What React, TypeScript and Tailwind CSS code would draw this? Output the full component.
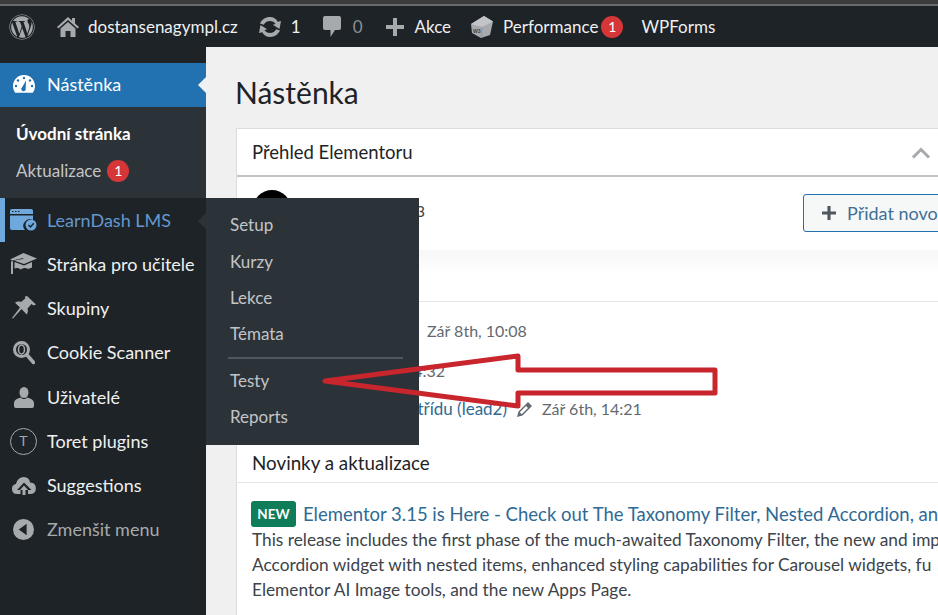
import { FaWordpress } from "react-icons/fa";

const FONT = "font-['Lato','Noto_Sans',sans-serif]";

function Badge({ n }: { n: number }) {
  return (
    <span className="flex h-[22px] w-[22px] items-center justify-center rounded-full bg-[#d63638] text-[14px] leading-none text-white">
      {n}
    </span>
  );
}

function HomeIcon() {
  return (
    <svg width="22" height="21" viewBox="0 0 22 21" fill="#a7aaad">
      <path d="M11 1 0 11l1.400 1.500L11 4l9.600 8.500L22 11l-4-3.600V2h-3v2.700z" />
      <path d="M3.500 12.500 11 6l7.500 6.500V21h-5v-6h-5v6h-5z" />
    </svg>
  );
}

function UpdateIcon() {
  return (
    <svg width="24" height="20" viewBox="0 0 24 20" fill="#a7aaad">
      <path d="M12 0c3.400 0 6.300 1.900 7.700 4.800L23 4l-1.500 8-6.700-4.300 2.700-.8C16.500 5 14.400 4 12 4 9.200 4 6.900 5.500 5.800 7.700L2 6.400C3.700 2.600 7.500 0 12 0z" />
      <path d="M12 20c-3.400 0-6.300-1.900-7.700-4.800L1 16l1.500-8 6.700 4.300-2.700.8C7.500 15 9.600 16 12 16c2.800 0 5.100-1.500 6.200-3.700l3.800 1.300C20.300 17.400 16.500 20 12 20z" />
    </svg>
  );
}

function CommentIcon() {
  return (
    <svg width="18" height="21" viewBox="0 0 18 21" fill="#a7aaad">
      <path d="M2 0h14a2 2 0 0 1 2 2v10a2 2 0 0 1-2 2h-4l-4.500 7V14H2a2 2 0 0 1-2-2V2a2 2 0 0 1 2-2z" />
    </svg>
  );
}

function PlusIcon({ size = 18, color = "#a7aaad" }: { size?: number; color?: string }) {
  return (
    <svg className="shrink-0" width={size} height={size} viewBox="0 0 18 18" fill={color}>
      <path d="M7 0h4v7h7v4h-7v7H7v-7H0V7h7z" />
    </svg>
  );
}

function CubeIcon() {
  return (
    <svg width="24" height="24" viewBox="0 0 24 24">
      <path d="M1 9 14 1l9 5.500-3 13.500-9 3-9-5z" fill="#a7aaad" />
      <path d="M1 9 14 1l9 5.500-11 5.500z" fill="#c3c4c7" />
      <path d="M12 12l-1 11" stroke="#8c8f94" strokeWidth="0.8" />
      <text x="3" y="18" fontSize="5" fontWeight="700" fill="#3c434a" fontFamily="Liberation Sans, sans-serif">W3</text>
    </svg>
  );
}

function GaugeIcon() {
  return (
    <svg width="22" height="18" viewBox="0 0 22 18">
      <path d="M11 0C4.900 0 0 4.900 0 11c0 2.500.8 4.900 2.200 6.800h17.600A11 11 0 0 0 22 11C22 4.900 17.100 0 11 0z" fill="#fff" />
      <circle cx="11" cy="3" r="1.200" fill="#2271b1" />
      <circle cx="5" cy="5.500" r="1.200" fill="#2271b1" />
      <circle cx="3" cy="11" r="1.200" fill="#2271b1" />
      <circle cx="17" cy="5.500" r="1.200" fill="#2271b1" />
      <circle cx="19" cy="11" r="1.200" fill="#2271b1" />
      <path d="M13 5.500 9.300 12a2.300 2.300 0 1 0 3.400 1.200z" fill="#2271b1" />
    </svg>
  );
}

function LearnDashIcon() {
  return (
    <svg width="27" height="22" viewBox="0 0 27 22">
      <path d="M0 2a2 2 0 0 1 2-2h19a2 2 0 0 1 2 2v3H0z" fill="#6fa8dc" />
      <path d="M0 6.500h23V11a6.500 6.500 0 0 0-8 10H2a2 2 0 0 1-2-2z" fill="#6fa8dc" />
      <path d="M2 2.500h1.500M5 2.500h1.500M8 2.500h1.500" stroke="#1d2327" strokeWidth="1" />
      <circle cx="21" cy="16" r="5.500" fill="#6fa8dc" />
      <path d="m18.500 16 2 2 3.200-3.800" stroke="#1d2327" strokeWidth="1.400" fill="none" />
    </svg>
  );
}

function CapIcon() {
  return (
    <svg width="27" height="22" viewBox="0 0 27 22" fill="#a7aaad">
      <path d="M13.500 0 27 5.500 14 11 4 7.500 13 6l.5-1-11 2.500L0 6.500z" />
      <path d="M1 8.500 3 8v13H1z" />
      <path d="M4.500 9 14 12.500 22 9v5.500l-4 1.500c-2-1.500-5-1.500-7 .5-2-1.500-4-2-6.500-1z" />
    </svg>
  );
}

function PinIcon() {
  return (
    <svg width="24" height="24" viewBox="0 0 24 24" fill="#a7aaad">
      <path d="m15 0 9 8.500-2.500 1-2-1.500-4 4.500c.8 2.400.3 4.500-.8 6L9.500 13 1 22.500l-1-.5L8 11.500 3 6.800c1.500-1.200 3.800-1.600 6-.8l4.500-3.800-.8-1.400z" />
    </svg>
  );
}

function ScanIcon() {
  return (
    <svg width="22" height="24" viewBox="0 0 22 24" fill="none">
      <circle cx="8.500" cy="8.500" r="7" stroke="#a7aaad" strokeWidth="3" />
      <ellipse cx="8.500" cy="8.500" rx="3" ry="4.500" stroke="#a7aaad" strokeWidth="1.500" />
      <path d="m14 14 6.500 7.500" stroke="#a7aaad" strokeWidth="3.500" strokeLinecap="round" />
    </svg>
  );
}

function UserIcon() {
  return (
    <svg width="20" height="21" viewBox="0 0 20 21" fill="#a7aaad">
      <ellipse cx="10" cy="5.500" rx="4.500" ry="5.500" />
      <path d="M7 10.500c-3 .8-7 2.300-7 5.500v3c0 1 .8 2 2 2h16c1.200 0 2-1 2-2v-3c0-3.200-4-4.700-7-5.500-1.500 2-4.500 2-6 0z" />
    </svg>
  );
}

function CloudIcon() {
  return (
    <svg width="24" height="18" viewBox="0 0 24 18" fill="#a7aaad">
      <path d="M12 0a6 6 0 0 1 6 5.500h.5a5.800 5.800 0 0 1 .5 11.500h-3v-4h3.500L12 5.500 5 13h3.500v4H5a5 5 0 0 1-1-9.900A8 8 0 0 1 12 0z" />
      <path d="M10.500 13H8l4-4.500 4 4.500h-2.500v5h-3z" />
    </svg>
  );
}

function CollapseIcon() {
  return (
    <svg width="21" height="21" viewBox="0 0 20 20">
      <circle cx="10" cy="10" r="10" fill="#a7aaad" />
      <path d="M13 4.500v11L5.500 10z" fill="#1d2327" />
    </svg>
  );
}

function TIcon() {
  return (
    <span className="flex h-[27px] w-[27px] items-center justify-center rounded-full border-[1.5px] border-[#a7aaad] text-[14px] leading-none text-[#a7aaad]">
      T
    </span>
  );
}

function PencilIcon() {
  return (
    <svg width="15" height="15" viewBox="0 0 15 15" fill="#646970">
      <path d="M11 0l4 4-9.500 9.500L0 15l1.500-5.500zM2.800 10.300l1.900 1.900L11 6 9 4z" />
    </svg>
  );
}

const menu = [
  { label: "Stránka pro učitele", icon: <CapIcon /> },
  { label: "Skupiny", icon: <PinIcon /> },
  { label: "Cookie Scanner", icon: <ScanIcon /> },
  { label: "Uživatelé", icon: <UserIcon /> },
  { label: "Toret plugins", icon: <TIcon /> },
  { label: "Suggestions", icon: <CloudIcon /> },
];

function MenuIcon({ children }: { children: React.ReactNode }) {
  return <span className="flex w-[47px] justify-center">{children}</span>;
}

function Sidebar() {
  return (
    <aside className="h-full w-[206px] shrink-0 bg-[#1d2327] pt-4 text-[18px]">
      <div className="relative flex h-[44px] items-center bg-[#2271b1] pb-[2px] text-white">
        <MenuIcon><GaugeIcon /></MenuIcon>
        <span>Nástěnka</span>
        <span className="absolute right-0 top-[14px] h-0 w-0 border-y-[8px] border-r-[8px] border-y-transparent border-r-[#f0f0f1]" />
      </div>
      <div className="flex h-[91px] flex-col bg-[#2c3338] pl-4 pt-[15px] text-[#c3c4c7]">
        <div className="h-[37px] text-[17px] font-bold leading-[24px] text-white">Úvodní stránka</div>
        <div className="flex items-center gap-[6px] text-[17px] leading-[24px]">
          Aktualizace <Badge n={1} />
        </div>
      </div>
      <div className="flex h-[44px] items-center border-l-[5px] border-[#6fa8dc] text-[#6498cf]">
        <span className="flex w-[37px] justify-center">
          <LearnDashIcon />
        </span>
        <span className="ml-[5px]">LearnDash LMS</span>
      </div>
      {menu.map((item) => (
        <div key={item.label} className="flex h-[44.300px] items-center text-[#f0f0f1]">
          <MenuIcon>{item.icon}</MenuIcon>
          <span>{item.label}</span>
        </div>
      ))}
      <div className="flex h-[44px] items-center text-[#a7aaad]">
        <MenuIcon><CollapseIcon /></MenuIcon>
        <span>Zmenšit menu</span>
      </div>
    </aside>
  );
}

function Flyout() {
  const top = ["Setup", "Kurzy", "Lekce", "Témata"];
  return (
    <div className="absolute left-[206px] top-[198px] h-[247px] w-[213px] bg-[#2c3338] pt-[9px] text-[17px] text-[#c3c4c7]">
      <span className="absolute -left-[8px] top-[15px] h-0 w-0 border-y-[8px] border-r-[8px] border-y-transparent border-r-[#2c3338]" />
      {top.map((t) => (
        <div key={t} className="flex h-[36.300px] items-center pl-6">{t}</div>
      ))}
      <div className="mx-[22px] mb-[3px] mt-[5px] h-[2px] w-[175px] bg-[#50575e]" />
      <div className="flex h-[36.400px] items-center pl-6">Testy</div>
      <div className="flex h-[36.400px] items-center pl-6">Reports</div>
    </div>
  );
}

function Content() {
  return (
    <main className="min-w-0 flex-1 overflow-hidden bg-[#f0f0f1] pl-[30px]">
      <h1 className="-ml-px h-[81px] pt-[26px] text-[30px] leading-[38px] text-[#1d2327]">Nástěnka</h1>
      <section className="h-[600px] w-[760px] border border-[#dcdcde] bg-white">
        <div className="flex h-[48px] items-center justify-between border-b-2 border-[#c3c4c7] pl-[15px] pr-[64px] pt-[1px]">
          <h2 className="text-[18.500px] text-[#1d2327]">Přehled Elementoru</h2>
          <svg width="20" height="12" viewBox="0 0 20 12" fill="none">
            <path d="M2 10.500 10 2.500l8 8" stroke="#a7aaad" strokeWidth="3" />
          </svg>
        </div>

        <div className="relative flex h-[73px] items-start pl-[16px] pt-[13px]">
          <span className="h-[38px] w-[38px] rounded-full bg-black" />
          <span className="ml-3 w-[122px] whitespace-nowrap pt-[9px] text-right text-[16px] text-[#3c434a]">Elementor 3.15.3</span>
          <div className="absolute left-[566px] top-[17px] flex h-[38px] w-[200px] items-center gap-[11px] whitespace-nowrap rounded-[3px] border border-[#2271b1] bg-[#f6f7f7] pl-[18px] text-[18px] text-[#3f6f96]">
            <PlusIcon size={14} color="#50575e" />
            Přidat novou stránku
          </div>
        </div>

        <div className="h-[51px] bg-linear-to-b from-[#f7f7f8] to-white to-50% pl-[15px] pt-[14px] text-[17px] text-[#1d2327]">
          Nedávno upraveno
        </div>

        <div className="flex h-[144px] flex-col border-t border-[#e4e4e6] pt-[17px] text-[16px] leading-[24px] text-[#646970]">
          <div className="flex h-[24px] items-center">
            <span className="w-[170px] text-right text-[17px] text-[#2e6a94]">Domů</span>
            <span className="ml-[20px]">Zář 8th, 10:08</span>
          </div>
          <div className="mt-[16px] flex h-[24px] items-center">
            <span className="w-[208px] text-right">Zář 7th, 14:32</span>
          </div>
          <div className="mt-[14px] flex h-[24px] items-center">
            <span className="w-[270px] text-right text-[17px] text-[#2e6a94]">Přidat třídu (lead2)</span>
            <span className="ml-[10px]"><PencilIcon /></span>
            <span className="ml-[10px]">Zář 6th, 14:21</span>
          </div>
        </div>

        <div className="flex h-[38px] items-center border-b border-[#e4e4e6] pl-[15px] text-[18.800px] text-[#1d2327]">
          Novinky a aktualizace
        </div>

        <div className="whitespace-nowrap pl-[15px] pt-[18px] text-[17.300px] leading-[25px] text-[#3c434a]">
          <div className="-ml-px flex items-center gap-[7px]">
            <span className="flex h-[26px] w-[45px] items-center justify-center rounded-[3px] bg-[#0f7c5a] text-[13.500px] font-bold text-white">NEW</span>
            <span className="text-[18.500px] text-[#2e6a94]">Elementor 3.15 is Here - Check out The Taxonomy Filter, Nested Accordion, an</span>
          </div>
          <p>This release includes the first phase of the much-awaited Taxonomy Filter, the new and imp</p>
          <p>Accordion widget with nested items, enhanced styling capabilities for Carousel widgets, fu</p>
          <p>Elementor AI Image tools, and the new Apps Page.</p>
        </div>
      </section>
    </main>
  );
}

export default function App() {
  return (
    <div className={`relative flex h-[615px] w-[938px] flex-col overflow-hidden bg-[#1d2327] ${FONT}`}>
      <div className="h-[4px] shrink-0 bg-[#3c3c3c]" />
      <div className="h-[2px] shrink-0 bg-[#6a6a6a]" />
      <header className="flex h-[41px] shrink-0 items-center bg-[#1d2327] pl-[9px] text-[17px] text-[#f0f0f1]">
        <FaWordpress size={26} color="#a7aaad" />
        <span className="ml-[22px]"><HomeIcon /></span>
        <span className="ml-[9px]">dostansenagympl.cz</span>
        <span className="ml-[20px]"><UpdateIcon /></span>
        <span className="ml-[9px]">1</span>
        <span className="ml-[22px]"><CommentIcon /></span>
        <span className="ml-[12px] text-[#8c8f94]">0</span>
        <span className="ml-[23px]"><PlusIcon /></span>
        <span className="ml-[11px]">Akce</span>
        <span className="ml-[19px]"><CubeIcon /></span>
        <span className="ml-[9px]">Performance</span>
        <span className="ml-[3px]"><Badge n={1} /></span>
        <span className="ml-[18px]">WPForms</span>
      </header>
      <div className="flex min-h-0 flex-1">
        <Sidebar />
        <Content />
      </div>
      <Flyout />
      {/* red annotation arrow */}
      <svg className="absolute left-0 top-0" width="938" height="615" fill="none">
        <path d="M325 381 518 356V370H715V393H518V406Z" stroke="#c9252d" strokeWidth="5" strokeLinejoin="round" />
      </svg>
    </div>
  );
}
